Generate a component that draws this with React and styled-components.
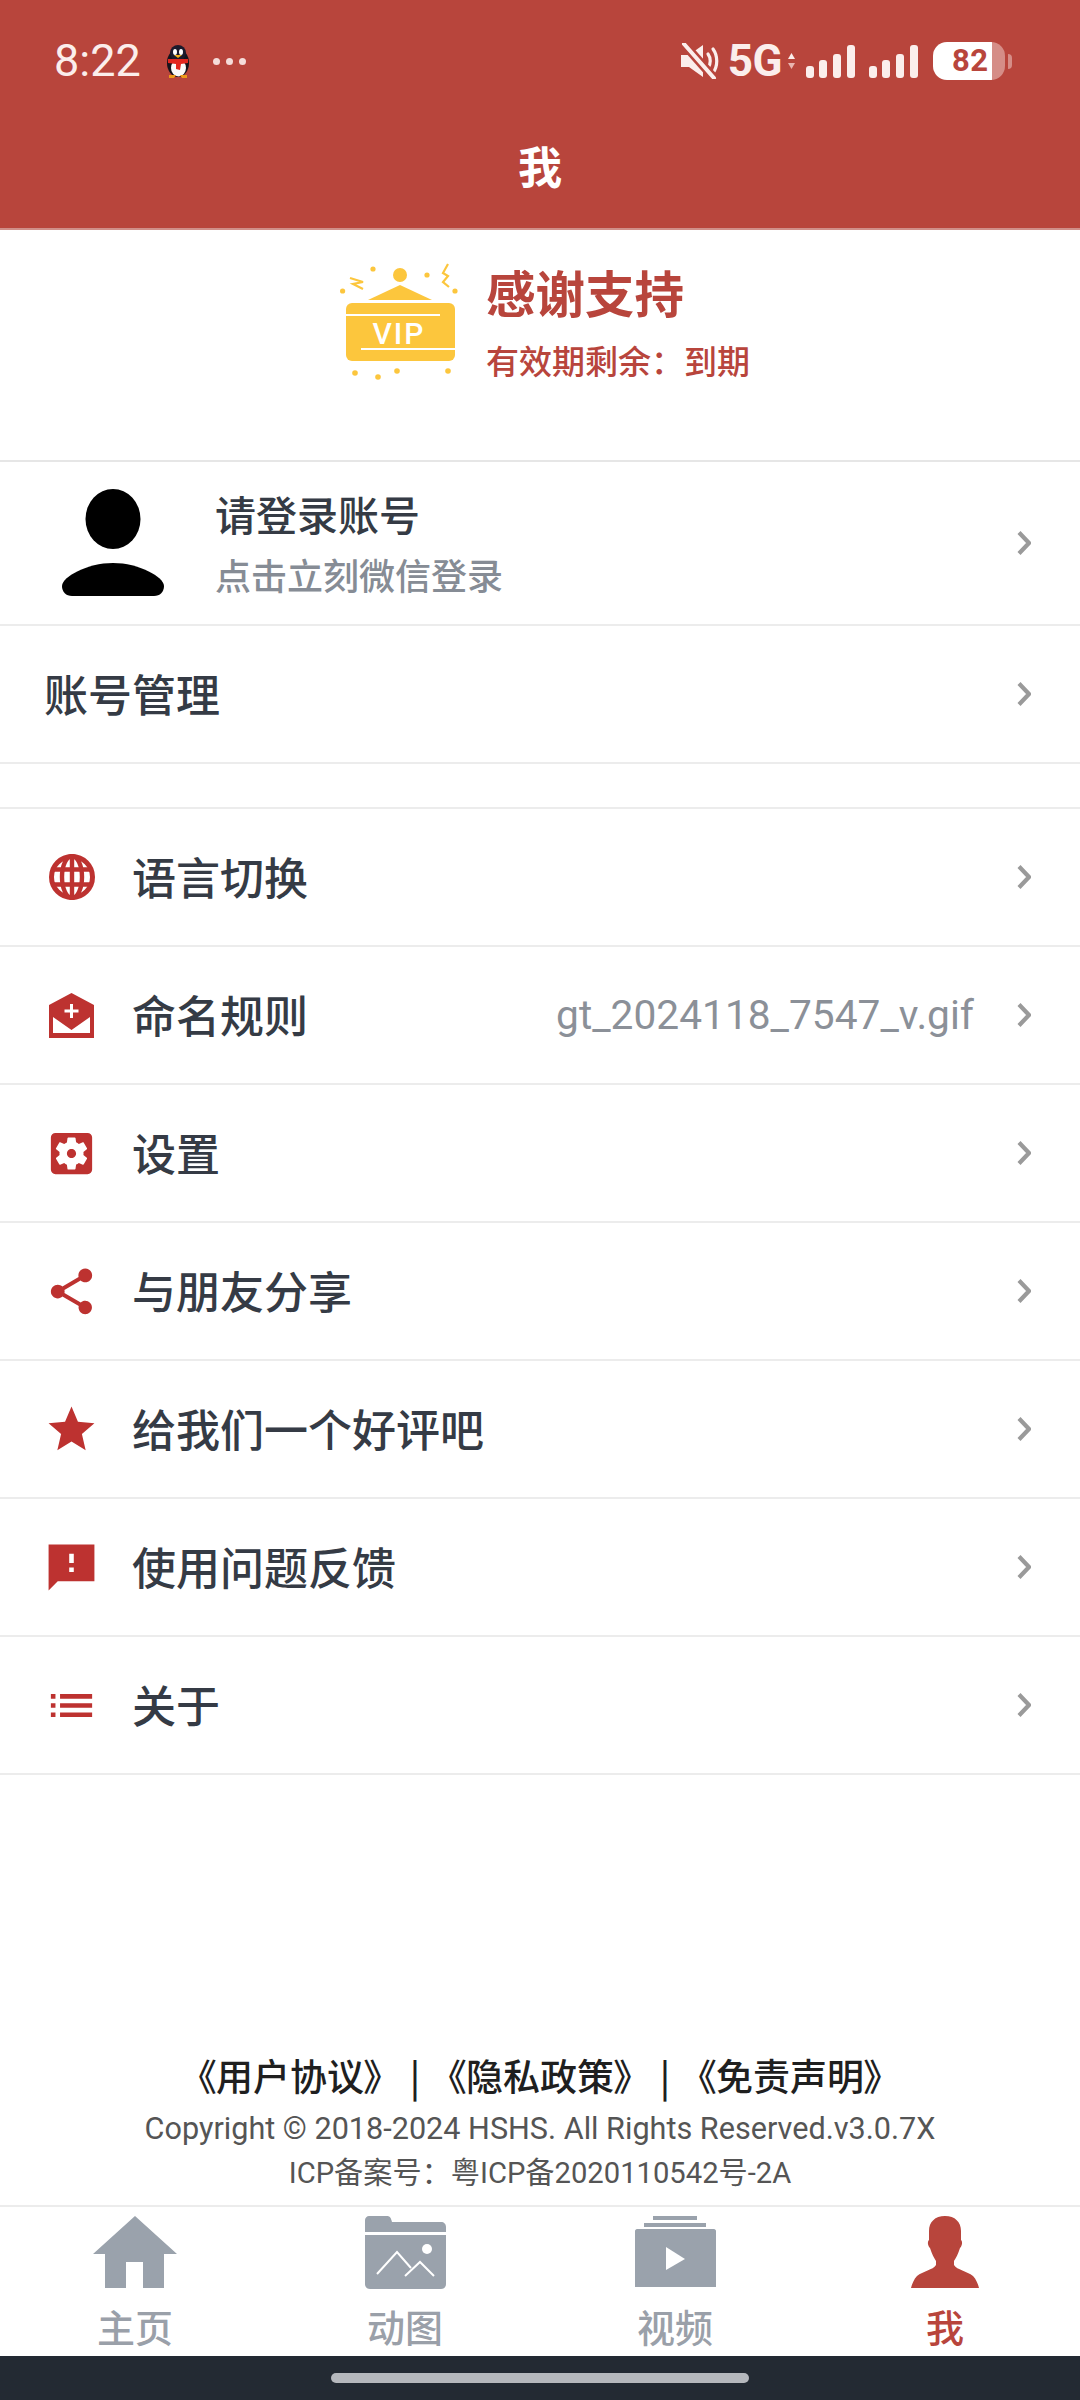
import styled, { createGlobalStyle } from 'styled-components';
import { MdSettingsApplications, MdShare, MdStar, MdList } from 'react-icons/md';

const RED = '#b8453c';
const ICON_RED = '#bd3230';

const GlobalStyle = createGlobalStyle`
    html, body {
        margin: 0;
        padding: 0;
        background: #fff;
    }
    body {
        font-family: "Noto Sans CJK SC", "Noto Sans", sans-serif;
    }
`;

const Page = styled.div`
    width: 1080px;
    height: 2400px;
    display: flex;
    flex-direction: column;
    background: #fff;
    overflow: hidden;
`;

const Header = styled.header`
    height: 230px;
    box-sizing: border-box;
    flex: none;
    background: ${RED};
    border-bottom: 2px solid #d08f89;
`;

const StatusBar = styled.div`
    height: 122px;
    box-sizing: border-box;
    padding: 0 68px 0 54px;
    display: flex;
    align-items: center;
    justify-content: space-between;
    font-family: Roboto, sans-serif;
    color: #fbeeec;
`;

const StatusLeft = styled.div`
    display: flex;
    align-items: center;
`;

const StatusRight = styled.div`
    display: flex;
    align-items: center;
`;

const Clock = styled.span`
    font-size: 45px;
    line-height: 50px;
`;

const Dots = styled.div`
    display: flex;
    gap: 6px;
    margin-left: 21px;
    span {
        width: 7px;
        height: 7px;
        border-radius: 50%;
        background: #f5dcd9;
    }
`;

const NetLabel = styled.span`
    font-size: 44px;
    font-weight: 700;
    line-height: 50px;
    margin-left: 7px;
    letter-spacing: -0.5px;
`;

const Battery = styled.div`
    width: 72px;
    height: 38px;
    margin-left: 15px;
    border-radius: 14px;
    background: linear-gradient(90deg, #fff 0, #fff 59px, #d58d87 59px, #d58d87 100%);
    color: ${RED};
    font-size: 31px;
    font-weight: 700;
    line-height: 38px;
    padding-left: 19px;
    box-sizing: border-box;
    letter-spacing: 0.5px;
`;

const BatteryTip = styled.div`
    width: 4px;
    height: 15px;
    margin-left: 3px;
    background: #d58d87;
    border-radius: 0 4px 4px 0;
`;

const Title = styled.div`
    height: 86px;
    line-height: 86px;
    text-align: center;
    color: #fff;
    font-size: 44px;
    font-weight: 700;
`;

const VipBlock = styled.section`
    height: 232px;
    box-sizing: border-box;
    flex: none;
    padding: 32px 0 0 340px;
    display: flex;
    border-bottom: 2px solid #e6e6e6;
`;

const VipText = styled.div`
    margin: 0 0 0 28px;
    color: ${RED};
`;

const VipTitle = styled.div`
    font-size: 49.5px;
    font-weight: 700;
    line-height: 60px;
`;

const VipSub = styled.div`
    font-size: 33px;
    font-weight: 500;
    line-height: 44px;
    margin-top: 16px;
`;

const Row = styled.div`
    height: ${(p) => p.$height || 138}px;
    box-sizing: border-box;
    flex: none;
    display: flex;
    align-items: center;
    padding: 0 49px 0 ${(p) => p.$left || 44}px;
    border-bottom: 2px solid #ececec;
`;

const Gap = styled.div`
    height: 45px;
    flex: none;
    box-sizing: border-box;
    border-bottom: 2px solid #ececec;
`;

const IconCell = styled.div`
    width: 55px;
    height: 55px;
    flex: none;
    display: flex;
    align-items: center;
    justify-content: center;
    margin-right: 33px;
    color: ${ICON_RED};
`;

const Label = styled.span`
    font-size: 44px;
    font-weight: 500;
    color: #353b45;
    line-height: 60px;
    padding-bottom: 3px;
`;

const RowEnd = styled.div`
    margin-left: auto;
    display: flex;
    align-items: center;
    gap: 43px;
`;

const Value = styled.span`
    font-family: Roboto, sans-serif;
    font-size: 40.7px;
    color: #8b9098;
`;

const LoginText = styled.div`
    margin-left: 50px;
    display: flex;
    flex-direction: column;
`;

const LoginName = styled.span`
    font-size: 41px;
    font-weight: 500;
    color: #353b45;
    line-height: 50px;
`;

const LoginHint = styled.span`
    font-size: 36px;
    font-weight: 500;
    color: #868c95;
    line-height: 50px;
    margin-top: 11px;
`;

const Footer = styled.footer`
    margin-top: auto;
    flex: none;
    padding-bottom: 10px;
    display: flex;
    flex-direction: column;
    align-items: center;
    border-bottom: 2px solid #ececec;
`;

const Links = styled.div`
    font-size: 37px;
    font-weight: 500;
    line-height: 50px;
    color: #1f1f1f;
    font-feature-settings: "palt";
    word-spacing: 19px;
`;

const Legal = styled.div`
    font-family: Roboto, "Noto Sans CJK SC", sans-serif;
    font-size: ${(p) => p.$size}px;
    line-height: 44px;
    color: #555;
    margin-top: ${(p) => p.$top || 0}px;
`;

const TabBar = styled.nav`
    height: 149px;
    flex: none;
    display: grid;
    grid-template-columns: repeat(4, 270px);
`;

const TabItem = styled.div`
    display: flex;
    flex-direction: column;
    align-items: center;
    padding-top: 9px;
    color: ${(p) => (p.$active ? RED : '#9aa0a9')};
`;

const TabIcon = styled.div`
    height: 74px;
    display: flex;
    align-items: flex-start;
`;

const TabLabel = styled.span`
    font-size: 38px;
    line-height: 36px;
    font-weight: 500;
    margin-top: 18px;
`;

const NavBar = styled.div`
    height: 44px;
    flex: none;
    background: #232a33;
    display: flex;
    align-items: center;
    justify-content: center;
`;

const NavPill = styled.div`
    width: 418px;
    height: 10px;
    border-radius: 5px;
    background: #b5b8bd;
`;

const Penguin = () => (
    <svg width="28" height="33" viewBox="0 0 28 33" style={{ marginLeft: 23 }}>
        <ellipse cx="14" cy="18" rx="11" ry="14" fill="#14131c" />
        <ellipse cx="14" cy="8" rx="8" ry="8" fill="#1b1a2c" />
        <ellipse cx="14.5" cy="23" rx="7.5" ry="8.5" fill="#fafafa" />
        <path d="M4 14 L24 14 L24 18 L17 19 L16 25 L12 24 L12 19 L4 18Z" fill="#e2261f" />
        <ellipse cx="11" cy="7" rx="2" ry="3" fill="#fff" />
        <ellipse cx="17" cy="7" rx="2" ry="3" fill="#fff" />
        <path d="M10 10 L18 10 L14 13Z" fill="#f2b21c" />
        <path d="M5 30 L12 30 L10 33 L5 33Z M16 30 L23 30 L23 33 L18 33Z" fill="#ec9a1a" />
    </svg>
);

const MuteIcon = () => (
    <svg width="40" height="36" viewBox="0 0 40 36">
        <path d="M0 12 H8 L22 2 V34 L8 24 H0Z" fill="#fbeeec" />
        <path d="M27 11 C30 15 30 21 27 25 M32 6 C37 13 37 23 32 30" fill="none" stroke="#fbeeec" strokeWidth="3.2" strokeLinecap="round" />
        <path d="M3 1 L33 35" stroke={RED} strokeWidth="9" />
        <path d="M3 1 L33 35" stroke="#fbeeec" strokeWidth="4" strokeLinecap="round" />
    </svg>
);

const UpDown = () => (
    <svg width="9" height="16" viewBox="0 0 9 16" style={{ marginLeft: 5 }}>
        <path d="M4.5 0 L8 6 H1Z" fill="#fbeeec" />
        <path d="M4.5 16 L8 10 H1Z" fill="#e9b5b0" />
    </svg>
);

const Signal = ({ left }) => (
    <svg width="49" height="33" viewBox="0 0 49 33" style={{ marginLeft: left }} fill="#fbeeec">
        <rect x="0" y="21" width="8" height="12" rx="3" />
        <rect x="13" y="15" width="8" height="18" rx="3" />
        <rect x="27" y="9" width="8" height="24" rx="3" />
        <rect x="41" y="0" width="8" height="33" rx="3" />
    </svg>
);

const VipBadge = () => (
    <svg width="118" height="120" viewBox="0 0 118 120" fill="#fcc63d">
        <rect x="6" y="41" width="109" height="58" rx="6" />
        <path d="M28 38 L60 23 L92 38Z" />
        <circle cx="60" cy="13" r="7" />
        <circle cx="33" cy="7" r="2.6" />
        <circle cx="87" cy="13" r="2.6" />
        <circle cx="2.6" cy="29" r="2.6" />
        <circle cx="115" cy="29" r="2.6" />
        <circle cx="15" cy="111" r="2.8" />
        <circle cx="38" cy="115" r="2.8" />
        <circle cx="57" cy="109" r="2.8" />
        <circle cx="108" cy="109" r="2.8" />
        <path d="M10 16 L23 20 L13 22 L23 27" fill="none" stroke="#fcc63d" strokeWidth="2.2" />
        <path d="M108 2 L103 11 L108 14 L103 20 L109 25" fill="none" stroke="#fcc63d" strokeWidth="2.2" />
        <path d="M6 53 H100 M21 87 H115" stroke="#fff" strokeWidth="2" />
        <text x="59" y="82" fill="#fff" fontFamily="Roboto, sans-serif" fontWeight="500" fontSize="30" textAnchor="middle" letterSpacing="2">VIP</text>
    </svg>
);

const Avatar = () => (
    <svg width="104" height="108" viewBox="0 0 104 108" fill="#000">
        <ellipse cx="52" cy="30" rx="27.5" ry="30" />
        <path d="M52 74 C78 74 103 88 103 97 C103 103 99 107 93 107 L11 107 C5 107 1 103 1 97 C1 88 26 74 52 74Z" />
    </svg>
);

const Chevron = () => (
    <svg width="14" height="24" viewBox="0 0 14 24" fill="none" stroke="#9a9a9a" strokeWidth="4.2">
        <path d="M2 1.5 L12 12 L2 22.5" />
    </svg>
);

const GlobeIcon = () => (
    <svg width="46" height="46" viewBox="0 0 46 46" fill="none" stroke={ICON_RED}>
        <circle cx="23" cy="23" r="20.5" fill="#fff" strokeWidth="5" />
        <ellipse cx="23" cy="23" rx="10" ry="21" strokeWidth="4.4" />
        <path d="M23 2 V44 M3 15.5 H43 M3 30.5 H43" strokeWidth="4.4" />
    </svg>
);

const MailIcon = () => (
    <svg width="45" height="45" viewBox="0 0 45 45" fill={ICON_RED}>
        <path d="M0 12 L22.5 0 L45 12 V45 H0Z M4 24 V40 H41 V24 L22.5 37Z" fillRule="evenodd" />
        <path d="M21 11 H24 V16.5 H29.5 V19.5 H24 V25 H21 V19.5 H15.5 V16.5 H21Z" fill="#fff" />
    </svg>
);

const FeedbackIcon = () => (
    <svg width="55" height="55" viewBox="0 0 24 24" fill={ICON_RED}>
        <path fillRule="evenodd" d="M22 2 H2 V22 L6 18 H22Z M13 14 H11 V12 H13Z M13 10 H11 V6 H13Z" />
    </svg>
);

const HomeIcon = () => (
    <svg width="84" height="74" viewBox="0 0 84 74" fill="#9aa2ac">
        <path d="M42 0 L84 38 H71 V72 H50 V46 H33 V72 H12 V38 H0Z" />
    </svg>
);

const FolderIcon = () => (
    <svg width="81" height="74" viewBox="0 0 81 74" fill="#9aa2ac">
        <path d="M4 0 H22 C25 0 26 2 27 6 H76 C79 6 81 8 81 11 V16 H0 V4 C0 2 2 0 4 0Z" />
        <path d="M0 19 H81 V68 C81 71 79 73 76 73 H5 C2 73 0 71 0 68Z" />
        <circle cx="62" cy="33" r="5" fill="#fff" />
        <path d="M12 58 L32 36 L46 52 M40 60 L55 46 L69 60" fill="none" stroke="#fff" strokeWidth="2" />
    </svg>
);

const VideoIcon = () => (
    <svg width="81" height="72" viewBox="0 0 81 72" fill="#9aa2ac">
        <rect x="18" y="0" width="44" height="4" />
        <rect x="9" y="7" width="62" height="4" />
        <path d="M2 13 H79 C80 13 81 14 81 15 V71 H0 V15 C0 14 1 13 2 13Z" />
        <path d="M31 31 L50 43 L31 54Z" fill="#fff" />
    </svg>
);

const MeIcon = () => (
    <svg width="68" height="73" viewBox="0 0 68 73" fill={RED}>
        <path d="M34 0 C44 0 50 6 50 15 L50 24 C52 26 51 30 49 32 C47 38 45 42 43 45 L43 49 C46 54 56 55 62 60 C65 63 67 68 68 72 L0 72 C1 68 3 63 6 60 C12 55 22 54 25 49 L25 45 C23 42 21 38 19 32 C17 30 16 26 18 24 L18 15 C18 6 24 0 34 0Z" />
    </svg>
);

const menu = [
    { icon: <GlobeIcon />, label: '语言切换' },
    { icon: <MailIcon />, label: '命名规则', value: 'gt_2024118_7547_v.gif' },
    { icon: <MdSettingsApplications size={55} />, label: '设置' },
    { icon: <MdShare size={55} />, label: '与朋友分享' },
    { icon: <MdStar size={55} />, label: '给我们一个好评吧' },
    { icon: <FeedbackIcon />, label: '使用问题反馈' },
    { icon: <MdList size={55} />, label: '关于' },
];

const tabs = [
    { icon: <HomeIcon />, label: '主页' },
    { icon: <FolderIcon />, label: '动图' },
    { icon: <VideoIcon />, label: '视频' },
    { icon: <MeIcon />, label: '我', active: true },
];

const App = () => (
    <Page>
        <GlobalStyle />
        <Header>
            <StatusBar>
                <StatusLeft>
                    <Clock>8:22</Clock>
                    <Penguin />
                    <Dots>
                        <span />
                        <span />
                        <span />
                    </Dots>
                </StatusLeft>
                <StatusRight>
                    <MuteIcon />
                    <NetLabel>5G</NetLabel>
                    <UpDown />
                    <Signal left={10} />
                    <Signal left={14} />
                    <Battery>82</Battery>
                    <BatteryTip />
                </StatusRight>
            </StatusBar>
            <Title>我</Title>
        </Header>

        <VipBlock>
            <VipBadge />
            <VipText>
                <VipTitle>感谢支持</VipTitle>
                <VipSub>有效期剩余：到期</VipSub>
            </VipText>
        </VipBlock>

        <Row $height={164} $left={61}>
            <Avatar />
            <LoginText>
                <LoginName>请登录账号</LoginName>
                <LoginHint>点击立刻微信登录</LoginHint>
            </LoginText>
            <RowEnd>
                <Chevron />
            </RowEnd>
        </Row>
        <Row>
            <Label>账号管理</Label>
            <RowEnd>
                <Chevron />
            </RowEnd>
        </Row>
        <Gap />

        {menu.map((item) => (
            <Row key={item.label}>
                <IconCell>{item.icon}</IconCell>
                <Label>{item.label}</Label>
                <RowEnd>
                    {item.value && <Value>{item.value}</Value>}
                    <Chevron />
                </RowEnd>
            </Row>
        ))}

        <Footer>
            <Links>《用户协议》 | 《隐私政策》 | 《免责声明》</Links>
            <Legal $size={30.6} $top={7}>Copyright © 2018-2024 HSHS. All Rights Reserved.v3.0.7X</Legal>
            <Legal $size={29.2}>ICP备案号：粤ICP备2020110542号-2A</Legal>
        </Footer>

        <TabBar>
            {tabs.map((tab) => (
                <TabItem key={tab.label} $active={tab.active}>
                    <TabIcon>{tab.icon}</TabIcon>
                    <TabLabel>{tab.label}</TabLabel>
                </TabItem>
            ))}
        </TabBar>
        <NavBar>
            <NavPill />
        </NavBar>
    </Page>
);

export default App;
